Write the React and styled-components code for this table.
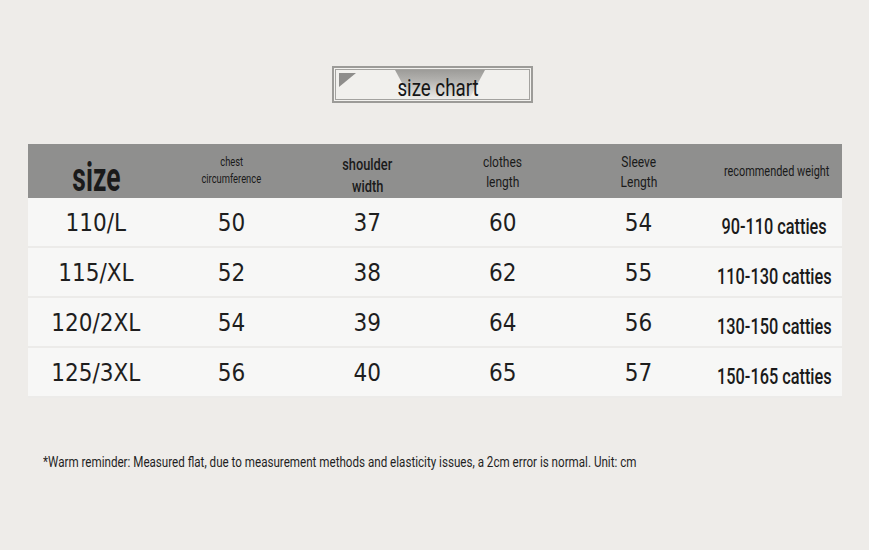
import React from "react";
import styled, { createGlobalStyle } from "styled-components";

const Global = createGlobalStyle`
  html, body { margin: 0; padding: 0; background: #eeece9; }
  body { font-family: Roboto, "Liberation Sans", sans-serif; }
`;

const Page = styled.div`
  width: 869px;
  height: 550px;
  background: #eeece9;
  display: flex;
  flex-direction: column;
  align-items: stretch;
  padding-top: 66px;
  box-sizing: border-box;
`;

const TitleWrap = styled.div`
  display: flex;
  justify-content: center;
  padding-right: 4px;
`;

const TitleBox = styled.div`
  position: relative;
  width: 201px;
  height: 37px;
  box-sizing: border-box;
  border: 2px solid #9c9b98;
  box-shadow: inset 0 0 0 1px #f3f2ef, inset 0 0 0 2px #a3a29f;
  background: #f1f0ed;
  display: flex;
  align-items: center;
  justify-content: center;
  overflow: hidden;
`;

const Funnel = styled.div`
  position: absolute;
  top: 2px;
  left: 61px;
  width: 90px;
  height: 30px;
  background: linear-gradient(to bottom, #9d9c99 0%, #b3b2af 35%, rgba(241,240,237,0) 100%);
  clip-path: polygon(0 0, 100% 0, 82% 100%, 18% 100%);
`;

const Corner = styled.div`
  position: absolute;
  top: 5px;
  left: 5px;
  width: 17px;
  height: 14px;
  background: #8e8d8b;
  clip-path: polygon(0 0, 100% 0, 0 100%);
`;

const Narrow = styled.span`
  display: inline-block;
  white-space: nowrap;
  transform: scaleX(${p => p.$scale || 0.78});
  transform-origin: ${p => p.$origin || "center"};
`;

const TitleText = styled.span`
  position: relative;
  font-size: 24px;
  color: #161616;
  padding-top: 7px;
  padding-left: 12px;
`;

const Table = styled.div`
  margin: 41px 27px 0 28px;
  display: grid;
  grid-template-columns: repeat(6, minmax(0, 1fr));
  background: #8f8f8e;
`;

const HeadCell = styled.div`
  background: #8f8f8e;
  height: 54px;
  display: flex;
  flex-direction: column;
  align-items: center;
  justify-content: center;
  text-align: center;
  color: #1a1a1a;
  font-size: ${p => p.$size}px;
  font-weight: ${p => p.$weight || 400};
  line-height: ${p => p.$lh || 1.3};
  padding-top: ${p => p.$pt || 0}px;
  padding-left: ${p => p.$pl || 0}px;
  box-sizing: border-box;
`;

const BodyCell = styled.div`
  background: #f7f7f6;
  height: 50px;
  border-bottom: 2px solid #ecebe9;
  display: flex;
  align-items: center;
  justify-content: center;
  font-family: "DejaVu Sans Condensed", "DejaVu Sans", sans-serif;
  font-size: 24px;
  color: #1e1e1e;
  padding-top: 2px;
  box-sizing: border-box;
  white-space: nowrap;
`;

const WeightCell = styled(BodyCell)`
  font-family: Roboto, sans-serif;
  font-weight: 500;
  font-size: 22px;
  color: #1a1a1a;
  padding-top: 8px;
`;

const Note = styled.div`
  margin: 56px 0 0 43px;
  font-size: 14px;
  color: #1f1f1f;
`;

const rows = [
  ["110/L", "50", "37", "60", "54", "90-110 catties"],
  ["115/XL", "52", "38", "62", "55", "110-130 catties"],
  ["120/2XL", "54", "39", "64", "56", "130-150 catties"],
  ["125/3XL", "56", "40", "65", "57", "150-165 catties"],
];

export default function App() {
  return (
    <Page>
      <Global />
      <TitleWrap>
        <TitleBox>
          <Funnel />
          <Corner />
          <TitleText><Narrow $scale={0.78}>size chart</Narrow></TitleText>
        </TitleBox>
      </TitleWrap>
      <Table>
        <HeadCell $size={40} $weight={700} $lh={1} $pt={14} $pl={2}>
          <Narrow $scale={0.66}>size</Narrow>
        </HeadCell>
        <HeadCell $size={12} $lh={1.4} $pt={-7}>
          <Narrow $scale={0.78}>chest</Narrow>
          <Narrow $scale={0.78}>circumference</Narrow>
        </HeadCell>
        <HeadCell $size={16} $weight={500} $lh={1.4} $pt={10}>
          <Narrow $scale={0.8}>shoulder</Narrow>
          <Narrow $scale={0.8}>width</Narrow>
        </HeadCell>
        <HeadCell $size={15} $lh={1.35} $pt={2}>
          <Narrow $scale={0.8}>clothes</Narrow>
          <Narrow $scale={0.8}>length</Narrow>
        </HeadCell>
        <HeadCell $size={15} $lh={1.35} $pt={2}>
          <Narrow $scale={0.8}>Sleeve</Narrow>
          <Narrow $scale={0.8}>Length</Narrow>
        </HeadCell>
        <HeadCell $size={14} $pt={-2} $pl={4}>
          <Narrow $scale={0.78}>recommended weight</Narrow>
        </HeadCell>
        {rows.map((r) => (
          <React.Fragment key={r[0]}>
            {r.slice(0, 5).map((v, i) => (
              <BodyCell key={i}>{v}</BodyCell>
            ))}
            <WeightCell><Narrow $scale={0.74}>{r[5]}</Narrow></WeightCell>
          </React.Fragment>
        ))}
      </Table>
      <Note>
        <Narrow $scale={0.83} $origin="left">*Warm reminder: Measured flat, due to measurement methods and elasticity issues, a 2cm error is normal. Unit: cm</Narrow>
      </Note>
    </Page>
  );
}
